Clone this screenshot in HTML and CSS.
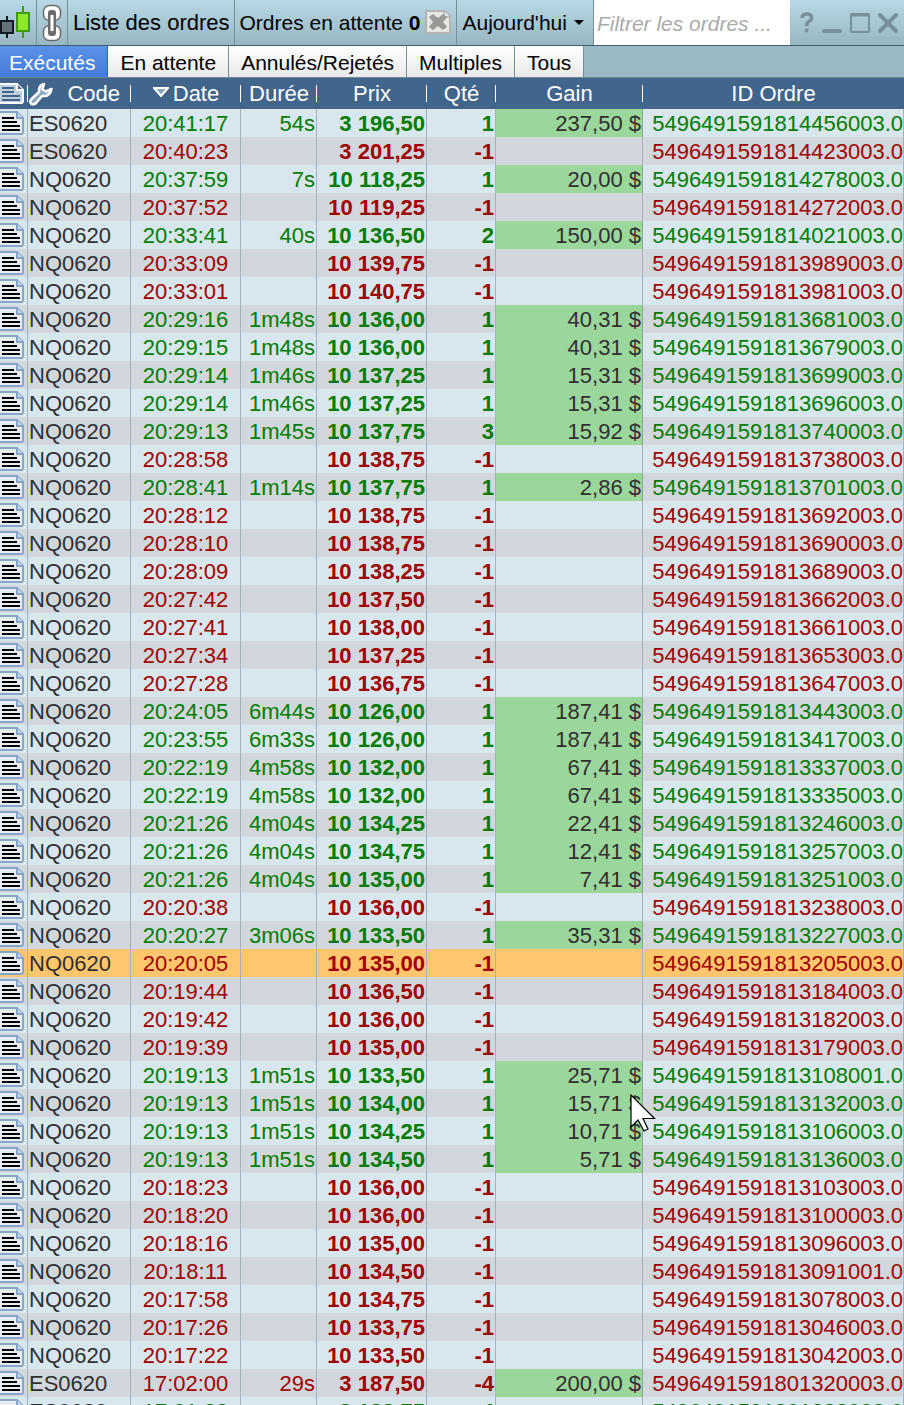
FILE: index.html
```html
<!DOCTYPE html>
<html lang="fr">
<head>
<meta charset="utf-8">
<title>Liste des ordres</title>
<link rel="stylesheet" href="styles.css">
</head>
<body>
<svg class="defs" aria-hidden="true">
  <symbol id="doc" viewBox="0 0 24 26">
    <path d="M-4 2H17L23 8V22Q23 24 21 24H-4Z" fill="#e8edf4" stroke="#87a5c6" stroke-width="2"/>
    <path d="M17 2V8H23" fill="#c9dbea" stroke="#87a5c6" stroke-width="2"/>
    <path d="M2 8H14M2 12H17M2 16H20M2 20H20" fill="none" stroke="#000" stroke-width="2"/>
  </symbol>
</svg>
<div class="window">
  <header class="toolbar">
    <div class="cell logo">
      <svg width="36" height="45" viewBox="0 0 36 45" aria-hidden="true">
        <path d="M7 16V38" stroke="#111a22" stroke-width="2"/>
        <rect x="1" y="21" width="12" height="12" fill="#66727b" stroke="#111a22" stroke-width="2"/>
        <path d="M23 6V38" stroke="#3f9a00" stroke-width="2"/>
        <rect x="17" y="13" width="12" height="18" fill="#8ee82a" stroke="#3f9a00" stroke-width="2"/>
      </svg>
    </div>
    <button class="cell link" aria-label="Lier">
      <svg width="20" height="38" viewBox="0 0 20 38" fill="none" aria-hidden="true">
        <g fill="#fff" stroke="#6b6b6b" stroke-width="1.500"><rect x="1.500" y="1.500" width="17" height="15" rx="6"/><rect x="1.500" y="21.500" width="17" height="15" rx="6"/></g>
        <rect x="6" y="6" width="8" height="26" rx="3" fill="#6b6b6b"/>
        <rect x="8.500" y="11" width="3" height="16" fill="#fff"/>
      </svg>
    </button>
    <h1 class="cell title">Liste des ordres</h1>
    <div class="cell pending">
      <span>Ordres en attente <b>0</b></span>
      <button class="cancel" aria-label="Annuler les ordres">
        <svg width="26" height="24" viewBox="0 0 26 24" aria-hidden="true">
          <path d="M1 1H20L25 6V23H1Z" fill="#e6e7e3" stroke="#b4b4b4" stroke-width="2"/>
          <path d="M19 1V7H25" fill="#e6e7e3" stroke="#b4b4b4" stroke-width="1.500"/>
          <path d="M4 7L8 4L13 8L18 4L22 7L18 12L22 17L18 20L13 16L8 20L4 17L8 12Z" fill="#999"/>
        </svg>
      </button>
    </div>
    <button class="cell period">Aujourd'hui
      <svg width="10" height="6" viewBox="0 0 10 6" aria-hidden="true"><path d="M0 0H10L5 5Z"/></svg>
    </button>
    <input class="filter" type="text" placeholder="Filtrer les ordres ..." aria-label="Filtrer les ordres">
    <div class="controls">
      <button aria-label="Aide"><svg width="14" height="22" viewBox="0 0 14 22" fill="none" aria-hidden="true"><path d="M2 6Q2 2 7 2Q11.500 2 11.500 6Q11.500 8 9 9.500Q6.500 11 6.500 14" stroke="#76919c" stroke-width="3.500"/><circle cx="6.500" cy="18.500" r="2" fill="#76919c"/></svg></button>
      <button aria-label="Réduire"><svg width="20" height="20" viewBox="0 0 20 20" aria-hidden="true"><rect x="0" y="16" width="20" height="4" rx="2" fill="#76919c"/></svg></button>
      <button aria-label="Agrandir"><svg width="20" height="20" viewBox="0 0 20 20" aria-hidden="true"><rect x="1" y="1" width="18" height="18" rx="1" fill="none" stroke="#76919c" stroke-width="2"/><path d="M1 2H19" stroke="#76919c" stroke-width="3"/></svg></button>
      <button aria-label="Fermer"><svg width="20" height="20" viewBox="0 0 20 20" aria-hidden="true"><path d="M2 2L18 18M18 2L2 18" stroke="#76919c" stroke-width="4" stroke-linecap="round"/></svg></button>
    </div>
  </header>
  <nav class="tabs">
    <button class="tab active">Exécutés</button>
    <button class="tab">En attente</button>
    <button class="tab">Annulés/Rejetés</button>
    <button class="tab">Multiples</button>
    <button class="tab">Tous</button>
  </nav>
  <main class="list">
    <table class="orders">
      <colgroup><col class="c-icon"><col class="c-code"><col class="c-date"><col class="c-dur"><col class="c-price"><col class="c-qty"><col class="c-gain"><col></colgroup>
      <thead>
        <tr>
          <th aria-label="Note"><svg class="doc" viewBox="0 0 24 26" aria-hidden="true"><path d="M-4 3H17L23 9V20Q23 22 21 22H-4Z" fill="#bdd0dc" stroke="#fff" stroke-width="2"/><path d="M17 3V9H23" fill="#42658c" stroke="#fff" stroke-width="2"/><path d="M2 7H14M2 11H14M2 15H20M2 19H20" stroke="#42658c" stroke-width="2"/></svg></th>
          <th><div class="code-head"><svg width="24" height="24" viewBox="0 0 24 24" aria-hidden="true"><path d="M15 2Q9.500 3 10 10L2.500 17Q0 20 2.500 22Q5 23 7 21L13 14Q21 15 22.500 7L17 9.500L13.500 7.500L15 2Z" fill="#8fa9c1" stroke="#fff" stroke-width="2.500" stroke-linejoin="round"/></svg><span>Code</span></div></th>
          <th><svg class="sort" width="16" height="11" viewBox="0 0 16 11" aria-hidden="true"><path d="M1 1H15L8 9Z" fill="#8ba5be" stroke="#fff" stroke-width="2"/></svg>Date</th>
          <th>Durée</th><th>Prix</th><th>Qté</th><th>Gain</th><th>ID Ordre</th>
        </tr>
      </thead>
      <tbody id="rows"></tbody>
    </table>
  </main>
  <svg class="cursor" width="26" height="40" viewBox="0 0 26 40" aria-hidden="true"><path d="M1 1V33L8 26L14 37L18 35L13 24.500H24.500Z" fill="#fff" stroke="#000" stroke-width="1.200"/></svg>
</div>
<script src="orders.js"></script>
</body>
</html>
```
FILE: styles.css
```css
* { box-sizing: border-box; }
body {
  margin: 0;
  font: 22px/26px "Liberation Sans", Arial, sans-serif;
  color: #000;
}
.defs { display: none; }
svg { flex: none; }
button {
  margin: 0;
  padding: 0;
  border: 0;
  background: none;
  font: inherit;
  color: inherit;
}
.window {
  position: relative;
  display: flex;
  flex-direction: column;
  height: 100vh;
  overflow: hidden;
}
.toolbar {
  display: flex;
  flex: none;
  height: 46px;
  border-bottom: 1px solid #3f5f6d;
  background: linear-gradient(#b7d8e5, #98b6c2);
  font-size: 21px;
}
.cell {
  display: flex;
  align-items: center;
  flex: none;
  border-right: 1px solid #76909b;
  white-space: nowrap;
}
.logo { width: 37px; }
.link { width: 31px; justify-content: center; }
.title {
  margin: 0;
  padding: 0 4px 0 5px;
  font-size: 22px;
  font-weight: normal;
}
.pending { gap: 5px; padding: 0 5px; }
.cancel { display: flex; padding-bottom: 2px; }
.period { gap: 7px; padding: 0 9px 0 5px; }
.filter {
  flex: 1;
  min-width: 0;
  padding: 3px 3px 0;
  border: 0;
  border-radius: 0;
  background: #fff;
  font: italic 21px "Liberation Sans", Arial, sans-serif;
}
.filter::placeholder { color: #aaa; opacity: 1; }
.controls {
  display: flex;
  align-items: center;
  gap: 8px;
  padding: 0 6px 0 10px;
}
.controls button { display: flex; }
.tabs {
  display: flex;
  flex: none;
  height: 32px;
  border-bottom: 1px solid #6d8792;
  background: #9bb9c5;
  font-size: 21px;
}
.tab {
  padding: 2px 12px 0;
  border-right: 1px solid #76909b;
  background: linear-gradient(#fff, #e9e9e9);
}
.tab.active {
  padding-left: 9px;
  background: linear-gradient(#5a92e8, #437bd8);
  border-right-color: #2f62bd;
  color: #fff;
}
.list { flex: 1; min-height: 0; overflow: hidden; }
.orders {
  width: 100%;
  table-layout: fixed;
  border-collapse: separate;
  border-spacing: 0;
}
.c-icon { width: 28px; }
.c-code { width: 103px; }
.c-date { width: 110px; }
.c-dur { width: 76px; }
.c-price { width: 110px; }
.c-qty { width: 69px; }
.c-gain { width: 147px; }
th {
  height: 31px;
  padding: 0;
  background: #42658c linear-gradient(#fff, #fff) no-repeat right center / 1px 17px;
  color: #fff;
  font-weight: normal;
  white-space: nowrap;
}
th:last-child { background-image: none; }
.doc { display: block; width: 24px; height: 26px; }
.code-head {
  display: flex;
  align-items: center;
  justify-content: space-between;
  padding: 0 11px 0 1px;
}
.sort { margin-right: 4px; vertical-align: 3px; }
td {
  height: 28px;
  padding: 2px 1px 0;
  overflow: hidden;
  border-right: 1px solid #a3b2bd;
  background: #d8e6ed;
  text-align: right;
  white-space: nowrap;
}
tr:nth-child(even) td { background: #d1d7dd; }
td:first-child { padding: 0; }
.code { color: #303030; text-align: left; }
.date { text-align: center; }
.price, .qty { font-weight: bold; }
.gain { color: #303030; }
.id { padding: 2px 0 0; }
.buy { color: #007c00; }
.sell { color: #a00000; }
tr .gain.filled { background: #9bd69b; border-right-color: #8aa996; }
tr.selected:nth-child(n) td { background: #ffc66d; }
.cursor { position: absolute; left: 630px; top: 1094px; }
```
FILE: orders.js
```js
// code | time | duration | price | quantity | gain | id
const orders = `
ES|20:41:17|54s|3 196,50|1|237,50|814456003
ES|20:40:23||3 201,25|-1||814423003
NQ|20:37:59|7s|10 118,25|1|20,00|814278003
NQ|20:37:52||10 119,25|-1||814272003
NQ|20:33:41|40s|10 136,50|2|150,00|814021003
NQ|20:33:09||10 139,75|-1||813989003
NQ|20:33:01||10 140,75|-1||813981003
NQ|20:29:16|1m48s|10 136,00|1|40,31|813681003
NQ|20:29:15|1m48s|10 136,00|1|40,31|813679003
NQ|20:29:14|1m46s|10 137,25|1|15,31|813699003
NQ|20:29:14|1m46s|10 137,25|1|15,31|813696003
NQ|20:29:13|1m45s|10 137,75|3|15,92|813740003
NQ|20:28:58||10 138,75|-1||813738003
NQ|20:28:41|1m14s|10 137,75|1|2,86|813701003
NQ|20:28:12||10 138,75|-1||813692003
NQ|20:28:10||10 138,75|-1||813690003
NQ|20:28:09||10 138,25|-1||813689003
NQ|20:27:42||10 137,50|-1||813662003
NQ|20:27:41||10 138,00|-1||813661003
NQ|20:27:34||10 137,25|-1||813653003
NQ|20:27:28||10 136,75|-1||813647003
NQ|20:24:05|6m44s|10 126,00|1|187,41|813443003
NQ|20:23:55|6m33s|10 126,00|1|187,41|813417003
NQ|20:22:19|4m58s|10 132,00|1|67,41|813337003
NQ|20:22:19|4m58s|10 132,00|1|67,41|813335003
NQ|20:21:26|4m04s|10 134,25|1|22,41|813246003
NQ|20:21:26|4m04s|10 134,75|1|12,41|813257003
NQ|20:21:26|4m04s|10 135,00|1|7,41|813251003
NQ|20:20:38||10 136,00|-1||813238003
NQ|20:20:27|3m06s|10 133,50|1|35,31|813227003
NQ|20:20:05||10 135,00|-1||813205003
NQ|20:19:44||10 136,50|-1||813184003
NQ|20:19:42||10 136,00|-1||813182003
NQ|20:19:39||10 135,00|-1||813179003
NQ|20:19:13|1m51s|10 133,50|1|25,71|813108001
NQ|20:19:13|1m51s|10 134,00|1|15,71|813132003
NQ|20:19:13|1m51s|10 134,25|1|10,71|813106003
NQ|20:19:13|1m51s|10 134,50|1|5,71|813136003
NQ|20:18:23||10 136,00|-1||813103003
NQ|20:18:20||10 136,00|-1||813100003
NQ|20:18:16||10 135,00|-1||813096003
NQ|20:18:11||10 134,50|-1||813091001
NQ|20:17:58||10 134,75|-1||813078003
NQ|20:17:26||10 133,75|-1||813046003
NQ|20:17:22||10 133,50|-1||813042003
ES|17:02:00|29s|3 187,50|-4|200,00|801320003
ES|17:01:33||3 188,75|4||801288003
`.trim().split("\n").map(line => line.split("|"));

const selectedTime = "20:20:05";

document.getElementById("rows").innerHTML = orders.map(([code, time, duration, price, qty, gain, id]) => {
  const side = Number(qty) < 0 ? "sell" : "buy";
  return `<tr${time === selectedTime ? ' class="selected"' : ""}>
    <td><svg class="doc" aria-hidden="true"><use href="#doc"/></svg></td>
    <td class="code">${code}0620</td>
    <td class="date ${side}">${time}</td>
    <td class="${side}">${duration}</td>
    <td class="price ${side}">${price}</td>
    <td class="qty ${side}">${qty}</td>
    <td class="gain${gain ? " filled" : ""}">${gain ? gain + " $" : ""}</td>
    <td class="id ${side}">5496491591${id}.0</td>
  </tr>`;
}).join("");
```
